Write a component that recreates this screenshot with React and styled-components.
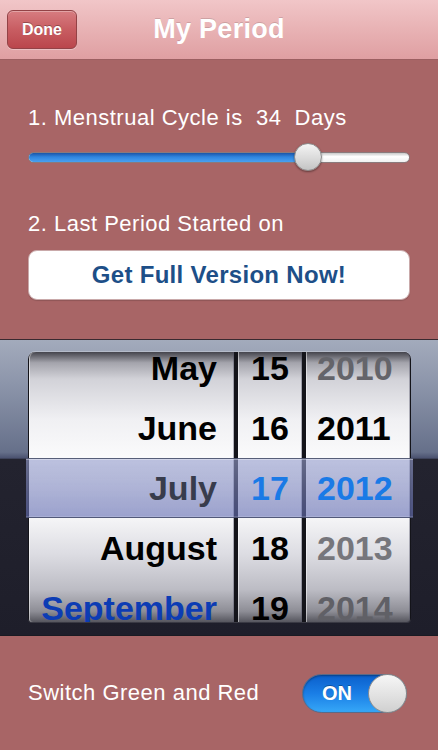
import React from 'react'
import styled, { createGlobalStyle } from 'styled-components'

const GlobalStyle = createGlobalStyle`
  html, body {
    margin: 0;
    padding: 0;
    background: #a86566;
  }
  body {
    font-family: "Liberation Sans", Arial, Helvetica, sans-serif;
  }
  * { box-sizing: border-box; }
`

const months = [
  { label: 'May', color: '#000' },
  { label: 'June', color: '#000' },
  { label: 'July', color: '#383c4c' },
  { label: 'August', color: '#000' },
  { label: 'September', color: '#0c3cb4' }
]
const days = [
  { label: '15', color: '#000' },
  { label: '16', color: '#000' },
  { label: '17', color: '#1a7ae6' },
  { label: '18', color: '#000' },
  { label: '19', color: '#000' }
]
const years = [
  { label: '2010', color: '#64646a' },
  { label: '2011', color: '#000' },
  { label: '2012', color: '#1a7ae6' },
  { label: '2013', color: '#76767c' },
  { label: '2014', color: '#606066' }
]

class App extends React.Component {
  state = {
    cycle: 34,
    switchOn: true
  }

  render() {
    return (
      <Screen>
        <GlobalStyle />
        <NavBar>
          <DoneButton>Done</DoneButton>
          <Title>My Period</Title>
        </NavBar>

        <Body>
          <Label>{`1. Menstrual Cycle is  ${this.state.cycle}  Days`}</Label>
          <Slider>
            <Track>
              <TrackFill style={{ width: '73.5%' }} />
            </Track>
            <Thumb />
          </Slider>
          <Label second>2. Last Period Started on</Label>
          <FullVersionButton>Get Full Version Now!</FullVersionButton>
        </Body>

        <PickerArea>
          <Wheels>
            <Column width="205px" align="flex-end" pad="0 17px 0 0" radius="6px 0 0 3px">
              <ColumnList>
                {months.map(m => (
                  <Cell key={m.label} color={m.color}>{m.label}</Cell>
                ))}
              </ColumnList>
            </Column>
            <Column width="64px" align="center" pad="0" radius="0">
              <ColumnList>
                {days.map(d => (
                  <Cell key={d.label} color={d.color}>{d.label}</Cell>
                ))}
              </ColumnList>
            </Column>
            <Column grow align="flex-start" pad="0 0 0 11px" radius="0 6px 3px 0">
              <ColumnList>
                {years.map(y => (
                  <Cell key={y.label} color={y.color}>{y.label}</Cell>
                ))}
              </ColumnList>
            </Column>
            <SelectionBar />
          </Wheels>
        </PickerArea>

        <Footer>
          <FooterLabel>Switch Green and Red</FooterLabel>
          <Toggle>
            <ToggleText>ON</ToggleText>
            <ToggleKnob />
          </Toggle>
        </Footer>
      </Screen>
    )
  }
}

export default App

const Screen = styled.div`
  width: 438px;
  height: 750px;
  display: flex;
  flex-direction: column;
  background: #a86566;
  overflow: hidden;
`

const NavBar = styled.div`
  height: 60px;
  flex-shrink: 0;
  display: flex;
  align-items: center;
  justify-content: center;
  position: relative;
  background: linear-gradient(to bottom, #f1c6c8 0%, #e8b2b4 50%, #df9fa2 100%);
  border-bottom: 1px solid #9c5f61;
`

const DoneButton = styled.button`
  position: absolute;
  left: 7px;
  top: 10px;
  width: 70px;
  height: 39px;
  border-radius: 6px;
  border: 1px solid #934246;
  background: linear-gradient(to bottom, #d77c80 0%, #c85d62 50%, #ba464c 100%);
  box-shadow: inset 0 1px 0 rgba(255, 255, 255, 0.3), 0 1px 0 rgba(255, 255, 255, 0.3);
  color: #fff;
  font-family: "Liberation Sans", Arial, sans-serif;
  font-weight: bold;
  font-size: 16px;
  text-shadow: 0 -1px 0 rgba(0, 0, 0, 0.3);
  padding: 0;
`

const Title = styled.h1`
  margin: 0;
  color: #fff;
  font-size: 27px;
  font-weight: bold;
  text-shadow: 0 -1px 0 rgba(0, 0, 0, 0.15);
  letter-spacing: 0.3px;
`

const Body = styled.div`
  flex: 0 0 280px;
  padding: 46px 28px 0 28px;
  display: flex;
  flex-direction: column;
  border-bottom: 1px solid #3a2a30;
`

const Label = styled.div`
  color: #fff;
  font-size: 22px;
  letter-spacing: 0.5px;
  line-height: 24px;
  white-space: pre;
  margin-top: ${p => (p.second ? '41px' : '0')};
`

const Slider = styled.div`
  position: relative;
  height: 28px;
  margin-top: 13px;
  display: flex;
  align-items: center;
`

const Track = styled.div`
  width: 100%;
  height: 11px;
  border-radius: 6px;
  background: linear-gradient(to bottom, #c8c8c8 0%, #ffffff 40%, #f0f0f0 100%);
  border: 1px solid #8a7a7c;
  overflow: hidden;
`

const TrackFill = styled.div`
  height: 100%;
  background: linear-gradient(to bottom, #1b55a8 0%, #2f86e0 45%, #4aa0f0 100%);
`

const Thumb = styled.div`
  position: absolute;
  left: 266px;
  top: 0;
  width: 28px;
  height: 28px;
  border-radius: 50%;
  background: linear-gradient(to bottom, #f4f4f4 0%, #d8d8d8 60%, #c4c4c4 100%);
  border: 1px solid #8c8c8c;
  box-shadow: 0 1px 2px rgba(0, 0, 0, 0.4);
`

const FullVersionButton = styled.button`
  margin-top: 14px;
  height: 50px;
  width: 100%;
  background: #fff;
  border: 1px solid #c9a9aa;
  border-radius: 9px;
  box-shadow: 0 1px 1px rgba(0, 0, 0, 0.15);
  color: #1d4f88;
  font-family: "Liberation Sans", Arial, sans-serif;
  font-weight: bold;
  font-size: 24px;
  letter-spacing: 0.3px;
  padding: 0;
`

const PickerArea = styled.div`
  flex: 0 0 296px;
  padding: 12px 27px 0 28px;
  background: linear-gradient(
    to bottom,
    #a3abbc 0%,
    #8c95aa 15%,
    #66708a 38%,
    #4b5270 40%,
    #23232f 40.5%,
    #1e1e2a 100%
  );
  border-bottom: 1px solid #1a1a22;
`

const Wheels = styled.div`
  position: relative;
  height: 270px;
  display: flex;
  gap: 4px;
  padding: 0 1px;
  background: #14141a;
  border-radius: 7px 7px 4px 4px;
  box-shadow: 0 -1px 0 rgba(255, 255, 255, 0.25), 0 1px 0 rgba(255, 255, 255, 0.12);
`

const Column = styled.div`
  flex: ${p => (p.grow ? '1 1 auto' : `0 0 ${p.width}`)};
  overflow: hidden;
  display: flex;
  flex-direction: column;
  align-items: ${p => p.align};
  padding: ${p => p.pad};
  background: linear-gradient(
    to bottom,
    #44444c 0%,
    #a4a4ac 4%,
    #d2d2d8 10%,
    #f0f0f3 25%,
    #fbfbfc 40%,
    #f4f4f6 62%,
    #dcdce2 75%,
    #bcbcc4 88%,
    #8e8e96 96%,
    #56565e 100%
  );
  box-shadow: inset 1px 0 0 rgba(255, 255, 255, 0.5), inset -1px 0 0 rgba(80, 80, 100, 0.4);
  border-radius: ${p => p.radius};
`

const ColumnList = styled.div`
  margin-top: -14px;
  display: flex;
  flex-direction: column;
  align-items: inherit;
`

const Cell = styled.div`
  position: relative;
  z-index: 2;
  height: 60px;
  display: flex;
  align-items: center;
  font-size: 34px;
  font-weight: bold;
  color: ${p => p.color};
  white-space: nowrap;
`

const SelectionBar = styled.div`
  position: absolute;
  z-index: 1;
  left: -2px;
  right: -2px;
  top: 106px;
  height: 60px;
  pointer-events: none;
  background: linear-gradient(
    to bottom,
    rgba(150, 158, 205, 0.62) 0%,
    rgba(125, 134, 190, 0.6) 50%,
    rgba(100, 110, 180, 0.62) 100%
  );
  border-top: 1px solid rgba(80, 86, 110, 0.9);
  border-bottom: 1px solid rgba(70, 76, 110, 0.9);
  box-shadow: inset 0 1px 0 rgba(255, 255, 255, 0.35), inset 0 -1px 0 rgba(255, 255, 255, 0.15);
`

const Footer = styled.div`
  flex: 1;
  display: flex;
  align-items: center;
  justify-content: space-between;
  padding: 0 31px 0 28px;
`

const FooterLabel = styled.div`
  color: #fff;
  font-size: 22px;
  letter-spacing: 0.5px;
`

const Toggle = styled.div`
  position: relative;
  width: 105px;
  height: 39px;
  border-radius: 20px;
  background: linear-gradient(to bottom, #0b5fcb 0%, #1a7ee6 50%, #36a7f7 100%);
  border: 1px solid #5a6a88;
  display: flex;
  align-items: center;
  box-shadow: inset 0 1px 2px rgba(0, 0, 0, 0.35);
`

const ToggleText = styled.span`
  width: 68px;
  text-align: center;
  color: #fff;
  font-weight: bold;
  font-size: 20px;
  text-shadow: 0 -1px 0 rgba(0, 0, 0, 0.3);
`

const ToggleKnob = styled.div`
  position: absolute;
  right: -1px;
  top: -1px;
  width: 39px;
  height: 39px;
  border-radius: 50%;
  background: linear-gradient(to bottom, #f6f6f6 0%, #e0e0e0 60%, #d0d0d0 100%);
  border: 1px solid #8e8e8e;
`
